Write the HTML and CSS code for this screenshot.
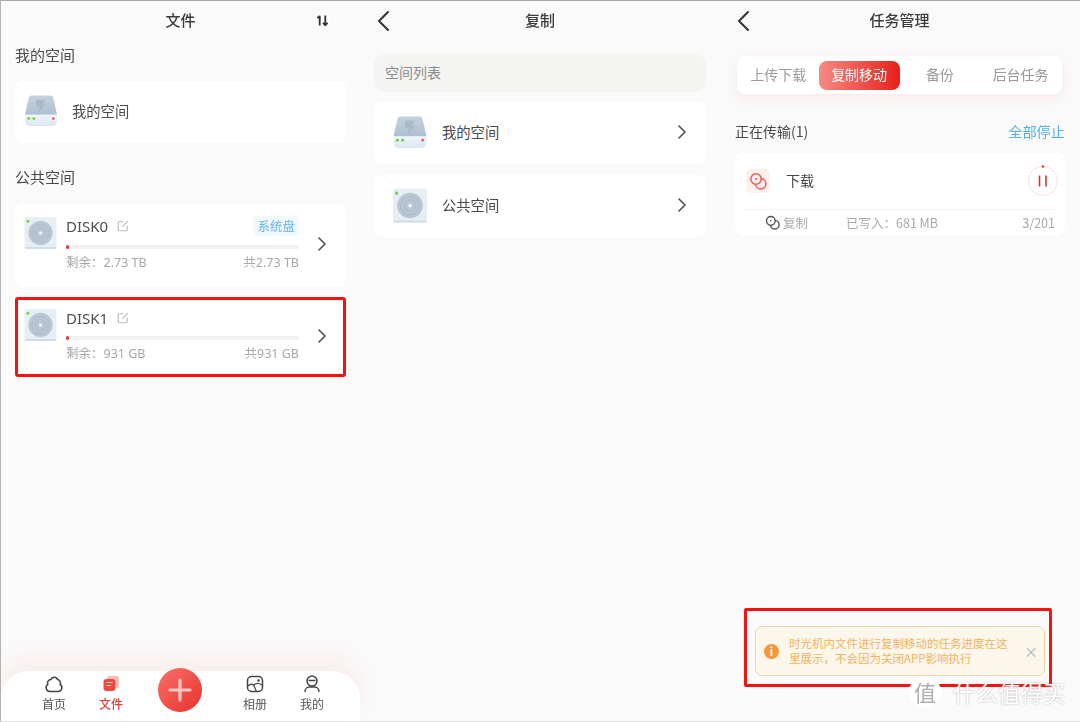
FILE: index.html
```html
<!DOCTYPE html>
<html lang="zh">
<head>
<meta charset="utf-8">
<title>任务管理</title>
<link rel="stylesheet" href="styles.css">
</head>
<body>
<svg class="defs" width="0" height="0">
  <defs>
    <linearGradient id="hddTop" x1="0" y1="0" x2="0" y2="1"><stop offset="0" stop-color="#c6d2de"/><stop offset="1" stop-color="#aebfd0"/></linearGradient>
    <linearGradient id="hddBase" x1="0" y1="0" x2="0" y2="1"><stop offset="0" stop-color="#f0f5f9"/><stop offset="1" stop-color="#dbe6f0"/></linearGradient>
    <symbol id="hdd" viewBox="0 0 36 36">
      <path d="M8 1.500h20a3 3 0 0 1 2.900 2.300L35 22H1L5.100 3.800A3 3 0 0 1 8 1.500z" fill="url(#hddTop)"/>
      <path d="M1 22h34v7a5 5 0 0 1-5 5H6a5 5 0 0 1-5-5z" fill="url(#hddBase)"/>
      <path d="M13 6h10l-4 5h4l-8 9 2-7h-4z" fill="#a8b9ca"/>
      <circle cx="5" cy="26" r="1.500" fill="#5fd14a"/><circle cx="10.500" cy="26" r="1.500" fill="#5fd14a"/><circle cx="31" cy="26" r="1.500" fill="#f0605a"/>
    </symbol>
    <symbol id="disk" viewBox="0 0 34 34">
      <rect x="0.500" y="0.500" width="33" height="33" rx="2" fill="#e7eff6"/>
      <path d="M0.500 31.500h33v0a2 2 0 0 1-2 2h-29a2 2 0 0 1-2-2z" fill="#cfdde9"/>
      <circle cx="17" cy="17" r="12.500" fill="#b9c6d3"/>
      <circle cx="17" cy="17" r="9" fill="none" stroke="#adbac8" stroke-width="1"/>
      <circle cx="17" cy="17" r="5.500" fill="none" stroke="#adbac8" stroke-width="1"/>
      <circle cx="17" cy="17" r="1.800" fill="#eef3f7"/>
      <circle cx="4" cy="5" r="1.500" fill="#5fd14a"/>
    </symbol>
    <symbol id="chev" viewBox="0 0 10 16"><path d="M2 2l6 6-6 6" fill="none" stroke="#555" stroke-width="1.700" stroke-linecap="round" stroke-linejoin="round"/></symbol>
    <symbol id="back" viewBox="0 0 14 22"><path d="M12 2L3 11l9 9" fill="none" stroke="#333" stroke-width="2" stroke-linecap="round" stroke-linejoin="round"/></symbol>
    <symbol id="edit" viewBox="0 0 14 14"><path d="M7 2H2.500a1 1 0 0 0-1 1v8.500a1 1 0 0 0 1 1H11a1 1 0 0 0 1-1V7M6.500 7.500L12.500 1.500" fill="none" stroke="#bbb" stroke-width="1.300" stroke-linecap="round"/></symbol>
  </defs>
</svg>

<main class="screens">
  <section class="panel panel-files">
    <header class="topbar">
      <h1 class="title">文件</h1>
      <span class="sort-btn">
        <svg width="13" height="13" viewBox="0 0 14 14"><path d="M4 12.500V2M1.500 4.500L4 2M10 1.500V12M7.500 9.500L10 12l2.500-2.500" fill="none" stroke="#333" stroke-width="2"/></svg>
      </span>
    </header>
    <h2 class="sec sec-first">我的空间</h2>
    <div class="card row-my">
      <svg class="ic-hdd-s"><use href="#hdd"/></svg>
      <span class="row-label">我的空间</span>
    </div>
    <h2 class="sec sec-second">公共空间</h2>
    <div class="card disk disk0">
      <svg class="ic-disk"><use href="#disk"/></svg>
      <div class="disk-body">
        <div class="disk-head">
          <span class="disk-name">DISK0</span>
          <svg class="ic-edit"><use href="#edit"/></svg>
          <span class="badge">系统盘</span>
        </div>
        <div class="bar"><i class="fill"></i></div>
        <div class="disk-meta"><span>剩余：2.73 TB</span><span>共2.73 TB</span></div>
      </div>
      <svg class="ic-chev"><use href="#chev"/></svg>
    </div>
    <div class="card disk disk1">
      <svg class="ic-disk"><use href="#disk"/></svg>
      <div class="disk-body">
        <div class="disk-head">
          <span class="disk-name">DISK1</span>
          <svg class="ic-edit"><use href="#edit"/></svg>
        </div>
        <div class="bar"><i class="fill"></i></div>
        <div class="disk-meta"><span>剩余：931 GB</span><span>共931 GB</span></div>
      </div>
      <svg class="ic-chev"><use href="#chev"/></svg>
    </div>

    <nav class="tabbar">
      <a class="tab">
        <svg width="20" height="20" viewBox="0 0 20 20"><path d="M6 17.500a3.900 3.900 0 0 1-2.200-7.100A3.500 3.500 0 0 1 7 5.500a3.500 3.500 0 0 1 6.600 0 3.500 3.500 0 0 1 2.600 4.900A3.900 3.900 0 0 1 14 17.500z" fill="none" stroke="#444" stroke-width="1.500"/></svg>
        <span>首页</span>
      </a>
      <a class="tab tab-on">
        <svg width="20" height="20" viewBox="0 0 20 20"><rect x="6" y="2" width="12" height="12" rx="2" fill="#f8bcb8"/><rect x="2.500" y="5" width="12" height="12" rx="3" fill="#ee4a42"/><path d="M5.500 8.500h6M5.500 11.500h4" stroke="#fbd0cc" stroke-width="1.200"/></svg>
        <span>文件</span>
      </a>
      <span class="fab">
        <svg width="24" height="24" viewBox="0 0 24 24"><path d="M12 2v20M2 12h20" stroke="#fbc9c5" stroke-width="3.200" stroke-linecap="round"/></svg>
      </span>
      <a class="tab">
        <svg width="20" height="20" viewBox="0 0 20 20"><rect x="2.500" y="2.500" width="15" height="15" rx="4" fill="none" stroke="#444" stroke-width="1.500"/><circle cx="13.500" cy="6.500" r="1.300" fill="#444"/><path d="M3 12c3-3 5-2 6 0s2 4 2 5M9 11c2-2 5-2 8 0" fill="none" stroke="#444" stroke-width="1.300"/></svg>
        <span>相册</span>
      </a>
      <a class="tab">
        <svg width="20" height="20" viewBox="0 0 20 20"><circle cx="10" cy="7" r="5" fill="none" stroke="#444" stroke-width="1.500"/><path d="M6.500 6.500h7" stroke="#444" stroke-width="1.500"/><path d="M3 18c0-3 2-5 4-5h6c2 0 4 2 4 5" fill="none" stroke="#444" stroke-width="1.500"/></svg>
        <span>我的</span>
      </a>
    </nav>
  </section>

  <section class="panel panel-copy">
    <header class="topbar">
      <svg class="ic-back"><use href="#back"/></svg>
      <h1 class="title">复制</h1>
    </header>
    <div class="list-head">空间列表</div>
    <div class="card row-copy">
      <svg class="ic-hdd-m"><use href="#hdd"/></svg>
      <span class="row-label">我的空间</span>
      <svg class="ic-chev"><use href="#chev"/></svg>
    </div>
    <div class="card row-copy">
      <svg class="ic-hdd-m"><use href="#disk"/></svg>
      <span class="row-label">公共空间</span>
      <svg class="ic-chev"><use href="#chev"/></svg>
    </div>
  </section>

  <section class="panel panel-tasks">
    <header class="topbar">
      <svg class="ic-back"><use href="#back"/></svg>
      <h1 class="title">任务管理</h1>
    </header>
    <div class="segments">
      <span class="seg">上传下载</span>
      <span class="seg seg-on">复制移动</span>
      <span class="seg">备份</span>
      <span class="seg">后台任务</span>
    </div>
    <div class="transfer-head">
      <span class="transfer-title">正在传输(1)</span>
      <span class="stop-all">全部停止</span>
    </div>
    <div class="card task">
      <div class="task-main">
        <span class="task-icon">
          <svg width="18" height="18" viewBox="0 0 18 18"><circle cx="7" cy="7" r="5.200" fill="none" stroke="#ee5a52" stroke-width="1.500"/><circle cx="7" cy="7" r="1" fill="#ee5a52"/><path d="M12 6.500a5.200 5.200 0 1 1-5.500 5.500" fill="none" stroke="#ee5a52" stroke-width="1.500"/></svg>
        </span>
        <span class="task-name">下载</span>
        <span class="pause">
          <svg width="32" height="32" viewBox="0 0 32 32"><circle cx="16" cy="16" r="14.500" fill="none" stroke="#fbdedc" stroke-width="1"/><circle cx="16" cy="1.500" r="1.200" fill="#e8302a"/><path d="M12.500 10.500v11M19 10.500v11" stroke="#e8302a" stroke-width="1.600"/></svg>
        </span>
      </div>
      <div class="task-meta">
        <span class="meta-kind">
          <svg width="15" height="15" viewBox="0 0 18 18"><circle cx="7" cy="7" r="5.200" fill="none" stroke="#555" stroke-width="1.700"/><circle cx="7" cy="7" r="1" fill="#555"/><path d="M12 6.500a5.200 5.200 0 1 1-5.500 5.500" fill="none" stroke="#555" stroke-width="1.700"/></svg>
          复制
        </span>
        <span class="meta-written">已写入：681 MB</span>
        <span class="meta-count">3/201</span>
      </div>
    </div>
    <div class="notice-frame">
      <div class="notice">
        <span class="notice-icon">i</span>
        <p class="notice-text">时光机内文件进行复制移动的任务进度在这里展示，不会因为关闭APP影响执行</p>
        <span class="notice-close">×</span>
      </div>
    </div>
    <div class="watermark"><span class="wm-logo">值</span><span class="wm-text">什么值得买</span></div>
  </section>
</main>
</body>
</html>
```
FILE: styles.css
```css
* { box-sizing: border-box; }
html, body { margin: 0; padding: 0; }
body {
  width: 1080px;
  height: 722px;
  overflow: hidden;
  background: #fafafa;
  font-family: "Noto Sans CJK SC", "Noto Sans", sans-serif;
  color: #444;
}
.defs { position: absolute; }
.screens {
  display: flex;
  width: 1080px;
  height: 722px;
  border-top: 1px solid #a9a9a9;
  border-left: 1px solid #b5b5b5;
  border-bottom: 1px solid #e4e4e4;
  filter: blur(0.4px);
}
.panel {
  position: relative;
  display: flex;
  flex-direction: column;
  width: 360px;
  flex: none;
  padding: 0 14px;
}
.panel-files { width: 359px; }
.panel-tasks { padding-right: 15px; }

.topbar {
  position: relative;
  display: flex;
  align-items: center;
  justify-content: center;
  height: 39px;
  flex: none;
}
.title {
  margin: -2px 0 0;
  font-size: 15px;
  font-weight: 500;
  color: #3c3c3c;
  line-height: 20px;
}
.sort-btn {
  position: absolute;
  right: 15px;
  top: 10px;
  width: 18px;
  height: 18px;
  border-radius: 50%;
  background: #fff;
  display: flex;
  align-items: center;
  justify-content: center;
}
.ic-back {
  position: absolute;
  left: 2px;
  top: 9px;
  width: 14px;
  height: 22px;
}
.sec {
  margin: 0;
  font-size: 15px;
  font-weight: 400;
  line-height: 20px;
  color: #4a4a4a;
}
.sec-first { margin-top: 5px; }
.sec-second { margin-top: 24px; }

.card {
  background: #fff;
  border-radius: 8px;
}
.row-my {
  display: flex;
  align-items: center;
  height: 62px;
  margin-top: 16px;
  padding: 0 10px 2px 9px;
}
.ic-hdd-s { width: 34px; height: 34px; flex: none; }
.row-label {
  margin-left: 14px;
  margin-bottom: 2px;
  font-size: 14.300px;
  color: #4a4a4a;
}
.disk {
  display: flex;
  align-items: flex-start;
  padding-left: 9px;
}
.disk0 { height: 82px; margin-top: 17px; padding-top: 12px; }
.disk1 {
  height: 80px;
  margin-top: 11px;
  padding-top: 11px;
  outline: 3px solid #f8120f;
  outline-offset: -3px;
  border-radius: 3px;
}
.ic-disk { width: 33px; height: 34px; flex: none; }
.disk-body {
  flex: none;
  width: 233px;
  margin-left: 9px;
  display: flex;
  flex-direction: column;
}
.disk-head {
  display: flex;
  align-items: center;
  height: 20px;
}
.disk-name {
  font-family: "Noto Sans", sans-serif;
  font-size: 15px;
  color: #4f4f4f;
}
.ic-edit { width: 12px; height: 12px; margin-left: 9px; }
.badge {
  margin-left: auto;
  padding: 0 4px;
  height: 20px;
  line-height: 19px;
  font-size: 12.500px;
  color: #5fb4ea;
  background: #f2f8fc;
  border-radius: 3px;
}
.bar {
  position: relative;
  height: 4px;
  margin-top: 9px;
  border-radius: 2px;
  background: #f1f1f1;
}
.disk1 .bar { margin-top: 8px; }
.fill {
  display: block;
  width: 3px;
  height: 4px;
  border-radius: 2px;
  background: #ee3b36;
}
.disk-meta {
  display: flex;
  justify-content: space-between;
  margin-top: 5px;
  font-size: 12.500px;
  line-height: 18px;
  color: #a8a8a8;
  font-family: "Noto Sans", "Noto Sans CJK SC", sans-serif;
}
.ic-chev {
  width: 10px;
  height: 16px;
  flex: none;
  margin-left: 18px;
  margin-top: 20px;
}
.tabbar {
  position: absolute;
  left: 0;
  right: 0;
  bottom: 0;
  height: 50px;
  display: flex;
  background: #fff;
  border-radius: 28px 28px 0 0;
  box-shadow: 0 -14px 22px rgba(240, 110, 100, 0.09);
  padding: 0 0 0 33px;
}
.tab {
  display: flex;
  flex-direction: column;
  align-items: center;
  width: 40px;
  padding-top: 3px;
  font-size: 12px;
  line-height: 18px;
  color: #555;
}
.tab span { margin-top: 1px; }
.tab-on { margin-left: 17px; color: #e0403a; font-weight: 500; }
.fab {
  position: absolute;
  left: 157px;
  top: -3px;
  width: 44px;
  height: 44px;
  border-radius: 50%;
  display: flex;
  align-items: center;
  justify-content: center;
  background: linear-gradient(135deg, #f8716a, #e9312c);
}
.tab:nth-of-type(3) { margin-left: 104px; }
.tab:nth-of-type(4) { margin-left: 17px; }

.list-head {
  height: 38px;
  margin-top: 14px;
  padding-left: 11px;
  line-height: 36px;
  font-size: 14px;
  color: #8c8c8c;
  background: #f4f4f3;
  border-radius: 10px;
  flex: none;
}
.row-copy {
  display: flex;
  align-items: center;
  height: 62px;
  margin-top: 10px;
  padding-left: 18px;
  padding-bottom: 2px;
  flex: none;
}
.row-copy + .row-copy { margin-top: 11px; }
.ic-hdd-m { width: 36px; height: 35px; flex: none; }
.row-copy .row-label { flex: 1; margin-left: 14px; margin-bottom: 1px; }
.row-copy .ic-chev { margin: 0 19px 0 0; }

.segments {
  display: flex;
  align-items: center;
  height: 38px;
  margin: 16px 3px 0 3px;
  padding: 0 1px 0 1px;
  background: #fff;
  border-radius: 8px;
  box-shadow: 0 4px 14px rgba(240, 110, 100, 0.12);
  flex: none;
}
.seg {
  flex: 1;
  text-align: center;
  font-size: 14px;
  line-height: 27px;
  height: 29px;
  color: #9a9a9a;
  border-radius: 8px;
}
.seg-on {
  color: #fff;
  background: linear-gradient(90deg, #f78a83, #e8201a);
}
.transfer-head {
  display: flex;
  justify-content: space-between;
  align-items: center;
  margin-top: 26px;
  height: 22px;
  flex: none;
}
.transfer-title { font-size: 14px; color: #4a4a4a; margin-left: 1px; }
.stop-all { font-size: 14.200px; color: #55aee8; }
.task {
  height: 82px;
  margin-top: 11px;
  margin-left: 1px;
  padding: 0 10px 0 11px;
  flex: none;
}
.task-main {
  display: flex;
  align-items: center;
  height: 57px;
  border-bottom: 1px solid #f1f3f6;
  margin-left: -2px;
  padding-left: 2px;
}
.task-icon {
  width: 24px;
  height: 24px;
  display: flex;
  align-items: center;
  justify-content: center;
  border-radius: 5px;
  background: #fdf0ef;
}
.task-name {
  margin-left: 16px;
  margin-bottom: 3px;
  font-size: 14px;
  flex: 1;
  color: #444;
}
.pause { width: 32px; height: 32px; margin-right: -4px; }
.task-meta {
  display: flex;
  align-items: center;
  height: 24px;
  font-size: 12.500px;
  color: #aaa;
}
.meta-kind {
  display: flex;
  align-items: center;
  gap: 3px;
  margin-left: 19px;
  width: 81px;
}
.meta-count { margin-left: auto; }

.notice-frame {
  position: absolute;
  left: 24px;
  top: 607px;
  width: 308px;
  height: 79px;
  border: 3px solid #f8120f;
  border-radius: 2px;
  padding: 15px 4px 0 8px;
}
.notice {
  display: flex;
  align-items: center;
  height: 50px;
  padding: 0 9px 0 8px;
  border: 1px solid #f0d6a5;
  border-radius: 7px;
  background: #fdf6ea;
}
.notice-icon {
  flex: none;
  width: 15px;
  height: 15px;
  border-radius: 50%;
  background: #f6963b;
  color: #fff;
  font-size: 11px;
  line-height: 15px;
  font-weight: 700;
  text-align: center;
}
.notice-text {
  margin: 0 0 0 10px;
  width: 224px;
  font-size: 11.500px;
  line-height: 15px;
  color: #edb464;
}
.notice-close {
  margin-left: auto;
  margin-right: -3px;
  font-size: 14px;
  line-height: 16px;
  color: #aeb4ba;
}
.watermark {
  position: absolute;
  left: 189px;
  top: 675px;
  display: flex;
  align-items: center;
  gap: 12px;
  color: #fff;
  text-shadow: 0 0 2px rgba(150, 150, 150, 0.8);
}
.wm-logo {
  width: 32px;
  height: 32px;
  border-radius: 50%;
  background: #fff;
  color: #b0b0b0;
  font-size: 22px;
  line-height: 30px;
  text-align: center;
  text-shadow: none;
}
.wm-text {
  font-size: 22.500px;
  line-height: 30px;
}
```
